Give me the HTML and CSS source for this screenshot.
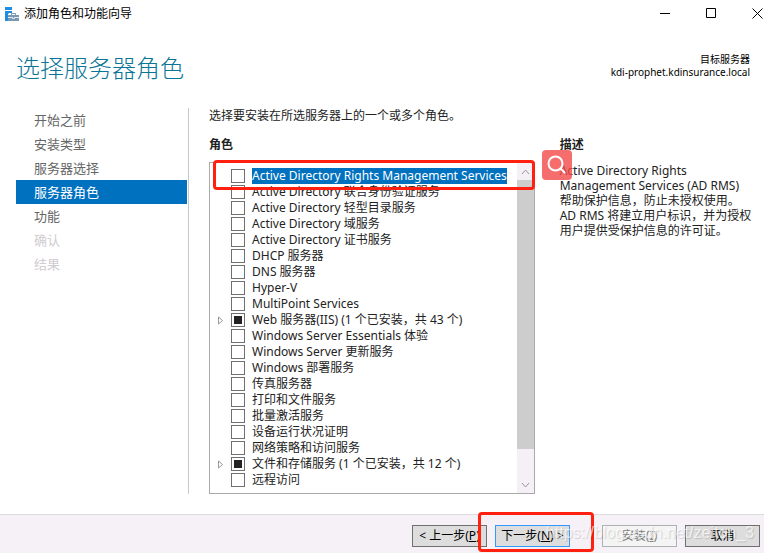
FILE: index.html
```html
<!DOCTYPE html>
<html lang="zh-CN">
<head>
    <meta charset="UTF-8">
    <meta name="viewport" content="width=device-width, initial-scale=1.0">
    <title>添加角色和功能向导</title>
    <link rel="stylesheet" href="styles.css">
</head>
<body>
    <div class="titlebar">
        <svg class="app-icon" width="15" height="14" viewBox="0 0 15 14">
            <path fill="#1e8ce0" d="M0 0h7v3H0zM0 4h7v2H4l-1 1v7H0z"/>
            <path fill="#7898b4" d="M3 8h11v6H3z"/>
            <path fill="none" stroke="#7898b4" d="M6.500 8V6.500h4V8"/>
            <path fill="none" stroke="#dfe8f0" d="M3 10.500h4M10 10.500h4M7.500 10v1.500h2V10"/>
        </svg>
        <span class="window-title">添加角色和功能向导</span>
        <div class="window-controls">
            <button aria-label="最小化"><svg width="11" height="11" viewBox="0 0 11 11"><path d="M0 5.500h10"/></svg></button>
            <button aria-label="最大化"><svg width="11" height="11" viewBox="0 0 11 11"><path d="M.5 .5h9v9h-9z"/></svg></button>
            <button aria-label="关闭"><svg width="11" height="11" viewBox="0 0 11 11"><path d="M.5 .5l10 10M10.500 .5l-10 10"/></svg></button>
        </div>
    </div>

    <header class="header">
        <h1>选择服务器角色</h1>
        <div class="target">
            <div>目标服务器</div>
            <div>kdi-prophet.kdinsurance.local</div>
        </div>
    </header>

    <div class="content">
        <nav class="steps">
            <a href="#">开始之前</a>
            <a href="#">安装类型</a>
            <a href="#">服务器选择</a>
            <a href="#" class="active">服务器角色</a>
            <a href="#">功能</a>
            <a class="disabled">确认</a>
            <a class="disabled">结果</a>
        </nav>

        <main class="page">
            <p class="intro">选择要安装在所选服务器上的一个或多个角色。</p>
            <div class="columns">
                <section class="roles">
                    <h2>角色</h2>
                    <div class="listbox">
                        <ul class="list">
                            <li><label><input type="checkbox"><span class="selected">Active Directory Rights Management Services</span></label></li>
                            <li><label><input type="checkbox"><span>Active Directory 联合身份验证服务</span></label></li>
                            <li><label><input type="checkbox"><span>Active Directory 轻型目录服务</span></label></li>
                            <li><label><input type="checkbox"><span>Active Directory 域服务</span></label></li>
                            <li><label><input type="checkbox"><span>Active Directory 证书服务</span></label></li>
                            <li><label><input type="checkbox"><span>DHCP 服务器</span></label></li>
                            <li><label><input type="checkbox"><span>DNS 服务器</span></label></li>
                            <li><label><input type="checkbox"><span>Hyper-V</span></label></li>
                            <li><label><input type="checkbox"><span>MultiPoint Services</span></label></li>
                            <li class="parent"><svg width="5" height="9" viewBox="0 0 5 9"><path d="M.5 1l4 3.500-4 3.500z"/></svg><label><input type="checkbox" class="partial"><span>Web 服务器(IIS) (1 个已安装，共 43 个)</span></label></li>
                            <li><label><input type="checkbox"><span>Windows Server Essentials 体验</span></label></li>
                            <li><label><input type="checkbox"><span>Windows Server 更新服务</span></label></li>
                            <li><label><input type="checkbox"><span>Windows 部署服务</span></label></li>
                            <li><label><input type="checkbox"><span>传真服务器</span></label></li>
                            <li><label><input type="checkbox"><span>打印和文件服务</span></label></li>
                            <li><label><input type="checkbox"><span>批量激活服务</span></label></li>
                            <li><label><input type="checkbox"><span>设备运行状况证明</span></label></li>
                            <li><label><input type="checkbox"><span>网络策略和访问服务</span></label></li>
                            <li class="parent"><svg width="5" height="9" viewBox="0 0 5 9"><path d="M.5 1l4 3.500-4 3.500z"/></svg><label><input type="checkbox" class="partial"><span>文件和存储服务 (1 个已安装，共 12 个)</span></label></li>
                            <li><label><input type="checkbox"><span>远程访问</span></label></li>
                        </ul>
                        <div class="scrollbar">
                            <svg width="9" height="6" viewBox="0 0 9 6"><path d="M1 5l3.500-4L8 5"/></svg>
                            <div class="thumb"></div>
                            <svg width="9" height="6" viewBox="0 0 9 6"><path d="M1 1l3.500 4L8 1"/></svg>
                        </div>
                        <div class="mark mark-role"></div>
                    </div>
                </section>
                <section class="description">
                    <h2>描述</h2>
                    <p>Active Directory Rights Management Services (AD RMS)<br>帮助保护信息，防止未授权使用。<br>AD RMS 将建立用户标识，并为授权用户提供受保护信息的许可证。</p>
                    <button class="search" aria-label="搜索">
                        <svg width="30" height="30" viewBox="0 0 30 30"><circle cx="13.500" cy="13.500" r="7"/><path d="M18.500 18.500l4 4"/></svg>
                    </button>
                </section>
            </div>
        </main>
    </div>

    <footer class="footer">
        <button>&lt; 上一步(<u>P</u>)</button>
        <div class="next">
            <button class="default">下一步(<u>N</u>) &gt;</button>
            <div class="mark mark-next"></div>
        </div>
        <button class="install" disabled>安装(<u>I</u>)</button>
        <button>取消</button>
        <div class="watermark">https://blog.csdn.net/zeiton_3</div>
    </footer>
</body>
</html>
```

FILE: styles.css
```css
* {
    box-sizing: border-box;
}

body {
    margin: 0;
    min-height: 100vh;
    display: flex;
    flex-direction: column;
    overflow: hidden;
    background: #fff;
    color: #222;
    font-family: "Noto Sans", "Noto Sans CJK SC", sans-serif;
    font-size: 12px;
    line-height: 16px;
}

h1, h2, p, ul {
    margin: 0;
    padding: 0;
}

/* title bar */
.titlebar {
    display: flex;
    align-items: center;
    height: 27px;
    padding-left: 5px;
    color: #000;
}

.window-title {
    margin-left: 4px;
}

.window-controls {
    display: flex;
    gap: 24px;
    margin-left: auto;
}

.window-controls button {
    display: flex;
    justify-content: center;
    width: 22px;
    padding: 0;
    border: none;
    background: none;
}

.window-controls button:last-child {
    margin-right: -4px;
}

.window-controls path {
    fill: none;
    stroke: #000;
}

/* header */
.header {
    display: flex;
    justify-content: space-between;
    padding: 25px 14px 0 16px;
    height: 81px;
}

h1 {
    color: #0b7596;
    font-size: 24px;
    font-weight: 300;
    line-height: 32px;
}

.target {
    padding-top: 1px;
    color: #000;
    font-size: 10px;
    line-height: 13px;
    text-align: right;
}

/* content */
.content {
    flex: 1;
    display: flex;
    padding: 0 4px 20px 16px;
}

.steps {
    width: 173px;
    padding-right: 1px;
    border-right: 1px solid #c8c8c8;
}

.steps a {
    display: block;
    height: 24px;
    padding-left: 18px;
    color: #666;
    font-size: 13px;
    line-height: 24px;
    text-decoration: none;
}

.steps .active {
    background: #0071bf;
    color: #fff;
}

.steps .disabled {
    color: #d0ccd1;
}

.page {
    flex: 1;
    display: flex;
    flex-direction: column;
    padding-left: 20px;
}

.intro {
    height: 28px;
}

.columns {
    flex: 1;
    display: flex;
    gap: 25px;
}

h2 {
    height: 26px;
    font-size: 12px;
    line-height: 18px;
}

.roles {
    flex: 13 1 0;
    display: flex;
    flex-direction: column;
}

.listbox {
    flex: 1;
    display: flex;
    position: relative;
    border: 1px solid #aaa;
}

.list {
    flex: 1;
    padding-top: 5px;
    list-style: none;
    white-space: nowrap;
}

.list li {
    display: flex;
    align-items: center;
    height: 16px;
    padding-left: 21px;
}

.list .parent {
    gap: 8px;
    padding-left: 8px;
}

.parent path {
    fill: #fff;
    stroke: #999;
}

.list label {
    display: flex;
    align-items: center;
    height: 16px;
}

.list span {
    margin-left: 7px;
}

.list input {
    appearance: none;
    flex: none;
    width: 14px;
    height: 14px;
    margin: 0;
    border: 1px solid #707070;
    background: #fff;
}

.list .partial {
    padding: 2px;
    background: #222 content-box;
}

.list .selected {
    background: #0071bf;
    color: #fff;
}

.scrollbar {
    display: flex;
    flex-direction: column;
    align-items: center;
    width: 17px;
    padding: 6px 0 5px;
    background: #f5f0f5;
}

.scrollbar path {
    fill: none;
    stroke: #999;
}

.thumb {
    width: 100%;
    height: 269px;
    margin: 5px 0 auto;
    background: #cdcdcd;
}

/* description */
.description {
    flex: 8 1 0;
    position: relative;
}

.description p {
    padding-top: 1px;
    line-height: 15px;
}

.search {
    position: absolute;
    top: 14px;
    left: -18px;
    width: 30px;
    height: 30px;
    padding: 0;
    border: none;
    border-radius: 4px;
    background: rgba(242, 72, 72, 0.8);
}

.search svg {
    display: block;
    fill: none;
    stroke: #fff;
    stroke-width: 2;
    stroke-linecap: round;
}

/* red highlight frames */
.mark {
    position: absolute;
    border: 3px solid #ff2010;
    border-radius: 4px;
    pointer-events: none;
}

.mark-role {
    top: -3px;
    left: 3px;
    right: -1px;
    height: 30px;
}

.mark-next {
    top: -13px;
    left: -17px;
    right: -24px;
    height: 40px;
}

/* footer */
.footer {
    display: flex;
    justify-content: flex-end;
    gap: 8px;
    position: relative;
    height: 39px;
    padding: 10px 4px 0;
    border-top: 1px solid #dcdcdc;
    background: #f6f1f7;
}

.footer button {
    width: 75px;
    height: 22px;
    padding: 0;
    border: 1px solid #707070;
    background: #ddd;
    color: #000;
    font: inherit;
}

.next {
    position: relative;
}

.footer .default {
    border-color: #3399ff;
}

.footer .install {
    margin-left: 24px;
    border-color: #adb2b5;
    background: #f4f4f4;
    color: #838383;
}

.watermark {
    position: absolute;
    top: 10px;
    right: 10px;
    color: rgba(255, 255, 255, 0.7);
    font-family: "Liberation Sans", sans-serif;
    font-size: 16px;
    text-shadow: 1px 1px 1px rgba(0, 0, 0, 0.15);
    pointer-events: none;
}
```
